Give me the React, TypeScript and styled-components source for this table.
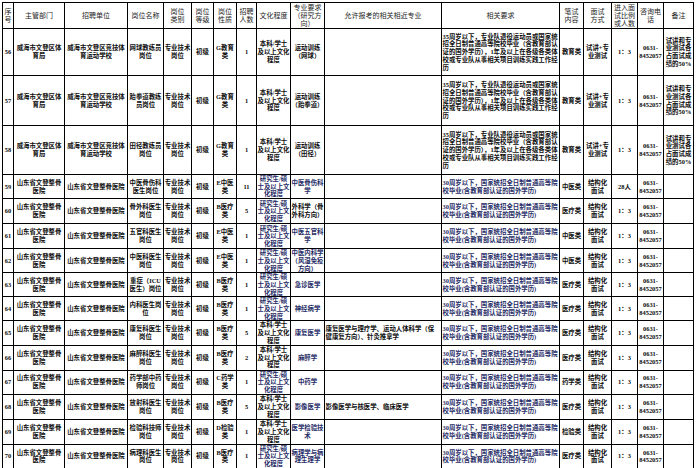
import React from "react";
import styled, { createGlobalStyle } from "styled-components";

const GlobalStyle = createGlobalStyle`
  html, body {
    margin: 0;
    padding: 0;
    background: #fff;
  }
  body {
    font-family: "Liberation Serif", "Noto Sans CJK SC", serif;
  }
`;

const Page = styled.div`
  width: 697px;
  padding: 2px;
  box-sizing: border-box;
`;

const Table = styled.table`
  border-collapse: collapse;
  table-layout: fixed;
  width: 691px;
  border: 1.5px solid #000;
`;

const Row = styled.tr<{ $h: number }>`
  height: ${({ $h }) => $h}px;
`;

const HeadCell = styled.th`
  border: 1px solid #000;
  padding: 0;
  font-size: 7px;
  font-weight: 400;
  line-height: 8px;
  color: #1e1e1e;
  text-align: center;
  vertical-align: middle;
  white-space: pre;
`;

const Cell = styled.td<{ $align?: "left" | "center"; $navy?: boolean }>`
  border: 1px solid #000;
  padding: 0 0.5px;
  font-size: 6.4px;
  font-weight: 700;
  line-height: 7.7px;
  color: ${({ $navy }) => ($navy ? "#1f2c66" : "#0d0d0d")};
  text-align: ${({ $align }) => $align ?? "center"};
  vertical-align: middle;
  white-space: pre;
  overflow: hidden;
`;

const widths = [11, 51, 63, 36, 28, 22, 23, 20, 34, 34, 117, 118, 24, 28, 26, 26, 30];

const headers = [
  "序\n号",
  "主管部门",
  "招聘单位",
  "岗位名称",
  "岗位\n类别",
  "岗位\n等级",
  "岗位\n性质",
  "招聘\n人数",
  "文化程度",
  "专业要求\n（研究方\n向）",
  "允许报考的相关相近专业",
  "相关要求",
  "笔试\n内容",
  "面试\n方式",
  "进入面\n试比例\n或人数",
  "咨询电\n话",
  "备注",
];

interface Post {
  no: number;
  h: number;
  dept: string;
  unit: string;
  post: string;
  nature: string;
  count: string;
  edu: string;
  major: string;
  majorNavy?: boolean;
  allowed?: string;
  req: string;
  reqNavy?: boolean;
  exam: string;
  interview: string;
  ratio: string;
  note?: string;
}

const bachelor = "本科/学士\n及以上文化\n程度";
const master = "研究生/硕\n士及以上文\n化程度";

const sport = (no: number, h: number, post: string, major: string): Post => ({
  no,
  h,
  dept: "威海市文登区体\n育局",
  unit: "威海市文登区竞技体\n育运动学校",
  post,
  nature: "G教育\n类",
  count: "1",
  edu: bachelor,
  major,
  req:
    "35周岁以下，专业队退役运动员或国家统\n招全日制普通高等院校毕业（含教育部认\n证的国外学历），1年及以上在各级各类体\n校或专业队从事相关项目训练实践工作经\n历",
  exam: "教育类",
  interview: "试讲+专\n业测试",
  ratio: "1：3",
  note: "试讲和专\n业测试各\n占面试成\n绩的50%",
});

const hosp = (
  no: number,
  h: number,
  post: string,
  nature: string,
  count: string,
  edu: string,
  major: string,
  exam: string,
  extra: Partial<Post> = {}
): Post => ({
  no,
  h,
  dept: "山东省文登整骨\n医院",
  unit: "山东省文登整骨医院",
  post,
  nature,
  count,
  edu,
  major,
  majorNavy: true,
  req: "30周岁以下，国家统招全日制普通高等院\n校毕业(含教育部认证的国外学历)",
  reqNavy: true,
  exam,
  interview: "结构化\n面试",
  ratio: "1：3",
  ...extra,
});

const posts: Post[] = [
  sport(56, 47, "网球教练员\n岗位", "运动训练\n（网球）"),
  sport(57, 50, "跆拳道教练\n员岗位", "运动训练\n（跆拳道）"),
  sport(58, 49, "田径教练员\n岗位", "运动训练\n（田径）"),
  hosp(59, 24, "中医骨伤科\n医生岗位", "E中医\n类", "11", master, "中医骨伤科\n学", "中医类", { ratio: "28人" }),
  hosp(60, 25, "骨外科医生\n岗位", "B医疗\n类", "5", master, "外科学（骨\n外科方向）", "医疗类", {
    majorNavy: false,
  }),
  hosp(61, 25, "五官科医生\n岗位", "E中医\n类", "1", master, "中医五官科\n学", "中医类"),
  hosp(62, 24, "中医科医生\n岗位", "E中医\n类", "1", master, "中医内科学\n（风湿免疫\n方向）", "中医类"),
  hosp(63, 24, "重症（ICU\n医生）岗位", "B医疗\n类", "1", master, "急诊医学", "医疗类"),
  hosp(64, 24, "内科医生岗\n位", "B医疗\n类", "1", master, "神经病学", "医疗类"),
  hosp(65, 24, "康复科医生\n岗位", "B医疗\n类", "5", bachelor, "康复医学", "医疗类", {
    allowed: "康复医学与理疗学、运动人体科学（保\n健康复方向）、针灸推拿学",
  }),
  hosp(66, 25, "麻醉科医生\n岗位", "B医疗\n类", "2", bachelor, "麻醉学", "医疗类"),
  hosp(67, 24, "药学部中药\n师岗位", "C药学\n类", "1", master, "中药学", "药学类"),
  hosp(68, 25, "放射科医生\n岗位", "B医疗\n类", "5", bachelor, "影像医学", "医疗类", {
    allowed: "影像医学与核医学、临床医学",
  }),
  hosp(69, 25, "检验科技师\n岗位", "D检验\n类", "1", bachelor, "医学检验技\n术", "检验类"),
  hosp(70, 22, "病理科医生\n岗位", "B医疗\n类", "1", master, "病理学与病\n理生理学", "医疗类"),
];

export default function App() {
  return (
    <Page>
      <GlobalStyle />
      <Table>
        <colgroup>
          {widths.map((w, i) => (
            <col key={i} style={{ width: w }} />
          ))}
        </colgroup>
        <thead>
          <Row $h={26}>
            {headers.map((h, i) => (
              <HeadCell key={i}>{h}</HeadCell>
            ))}
          </Row>
        </thead>
        <tbody>
          {posts.map((p) => (
            <Row key={p.no} $h={p.h}>
              <Cell>{p.no}</Cell>
              <Cell>{p.dept}</Cell>
              <Cell>{p.unit}</Cell>
              <Cell>{p.post}</Cell>
              <Cell>{"专业技术\n岗位"}</Cell>
              <Cell>初级</Cell>
              <Cell>{p.nature}</Cell>
              <Cell>{p.count}</Cell>
              <Cell $navy={p.edu === master}>{p.edu}</Cell>
              <Cell $navy={p.majorNavy}>{p.major}</Cell>
              <Cell $align="left">{p.allowed}</Cell>
              <Cell $align="left" $navy={p.reqNavy}>
                {p.req}
              </Cell>
              <Cell>{p.exam}</Cell>
              <Cell>{p.interview}</Cell>
              <Cell>{p.ratio}</Cell>
              <Cell>{"0631-\n8452057"}</Cell>
              <Cell>{p.note}</Cell>
            </Row>
          ))}
        </tbody>
      </Table>
    </Page>
  );
}
